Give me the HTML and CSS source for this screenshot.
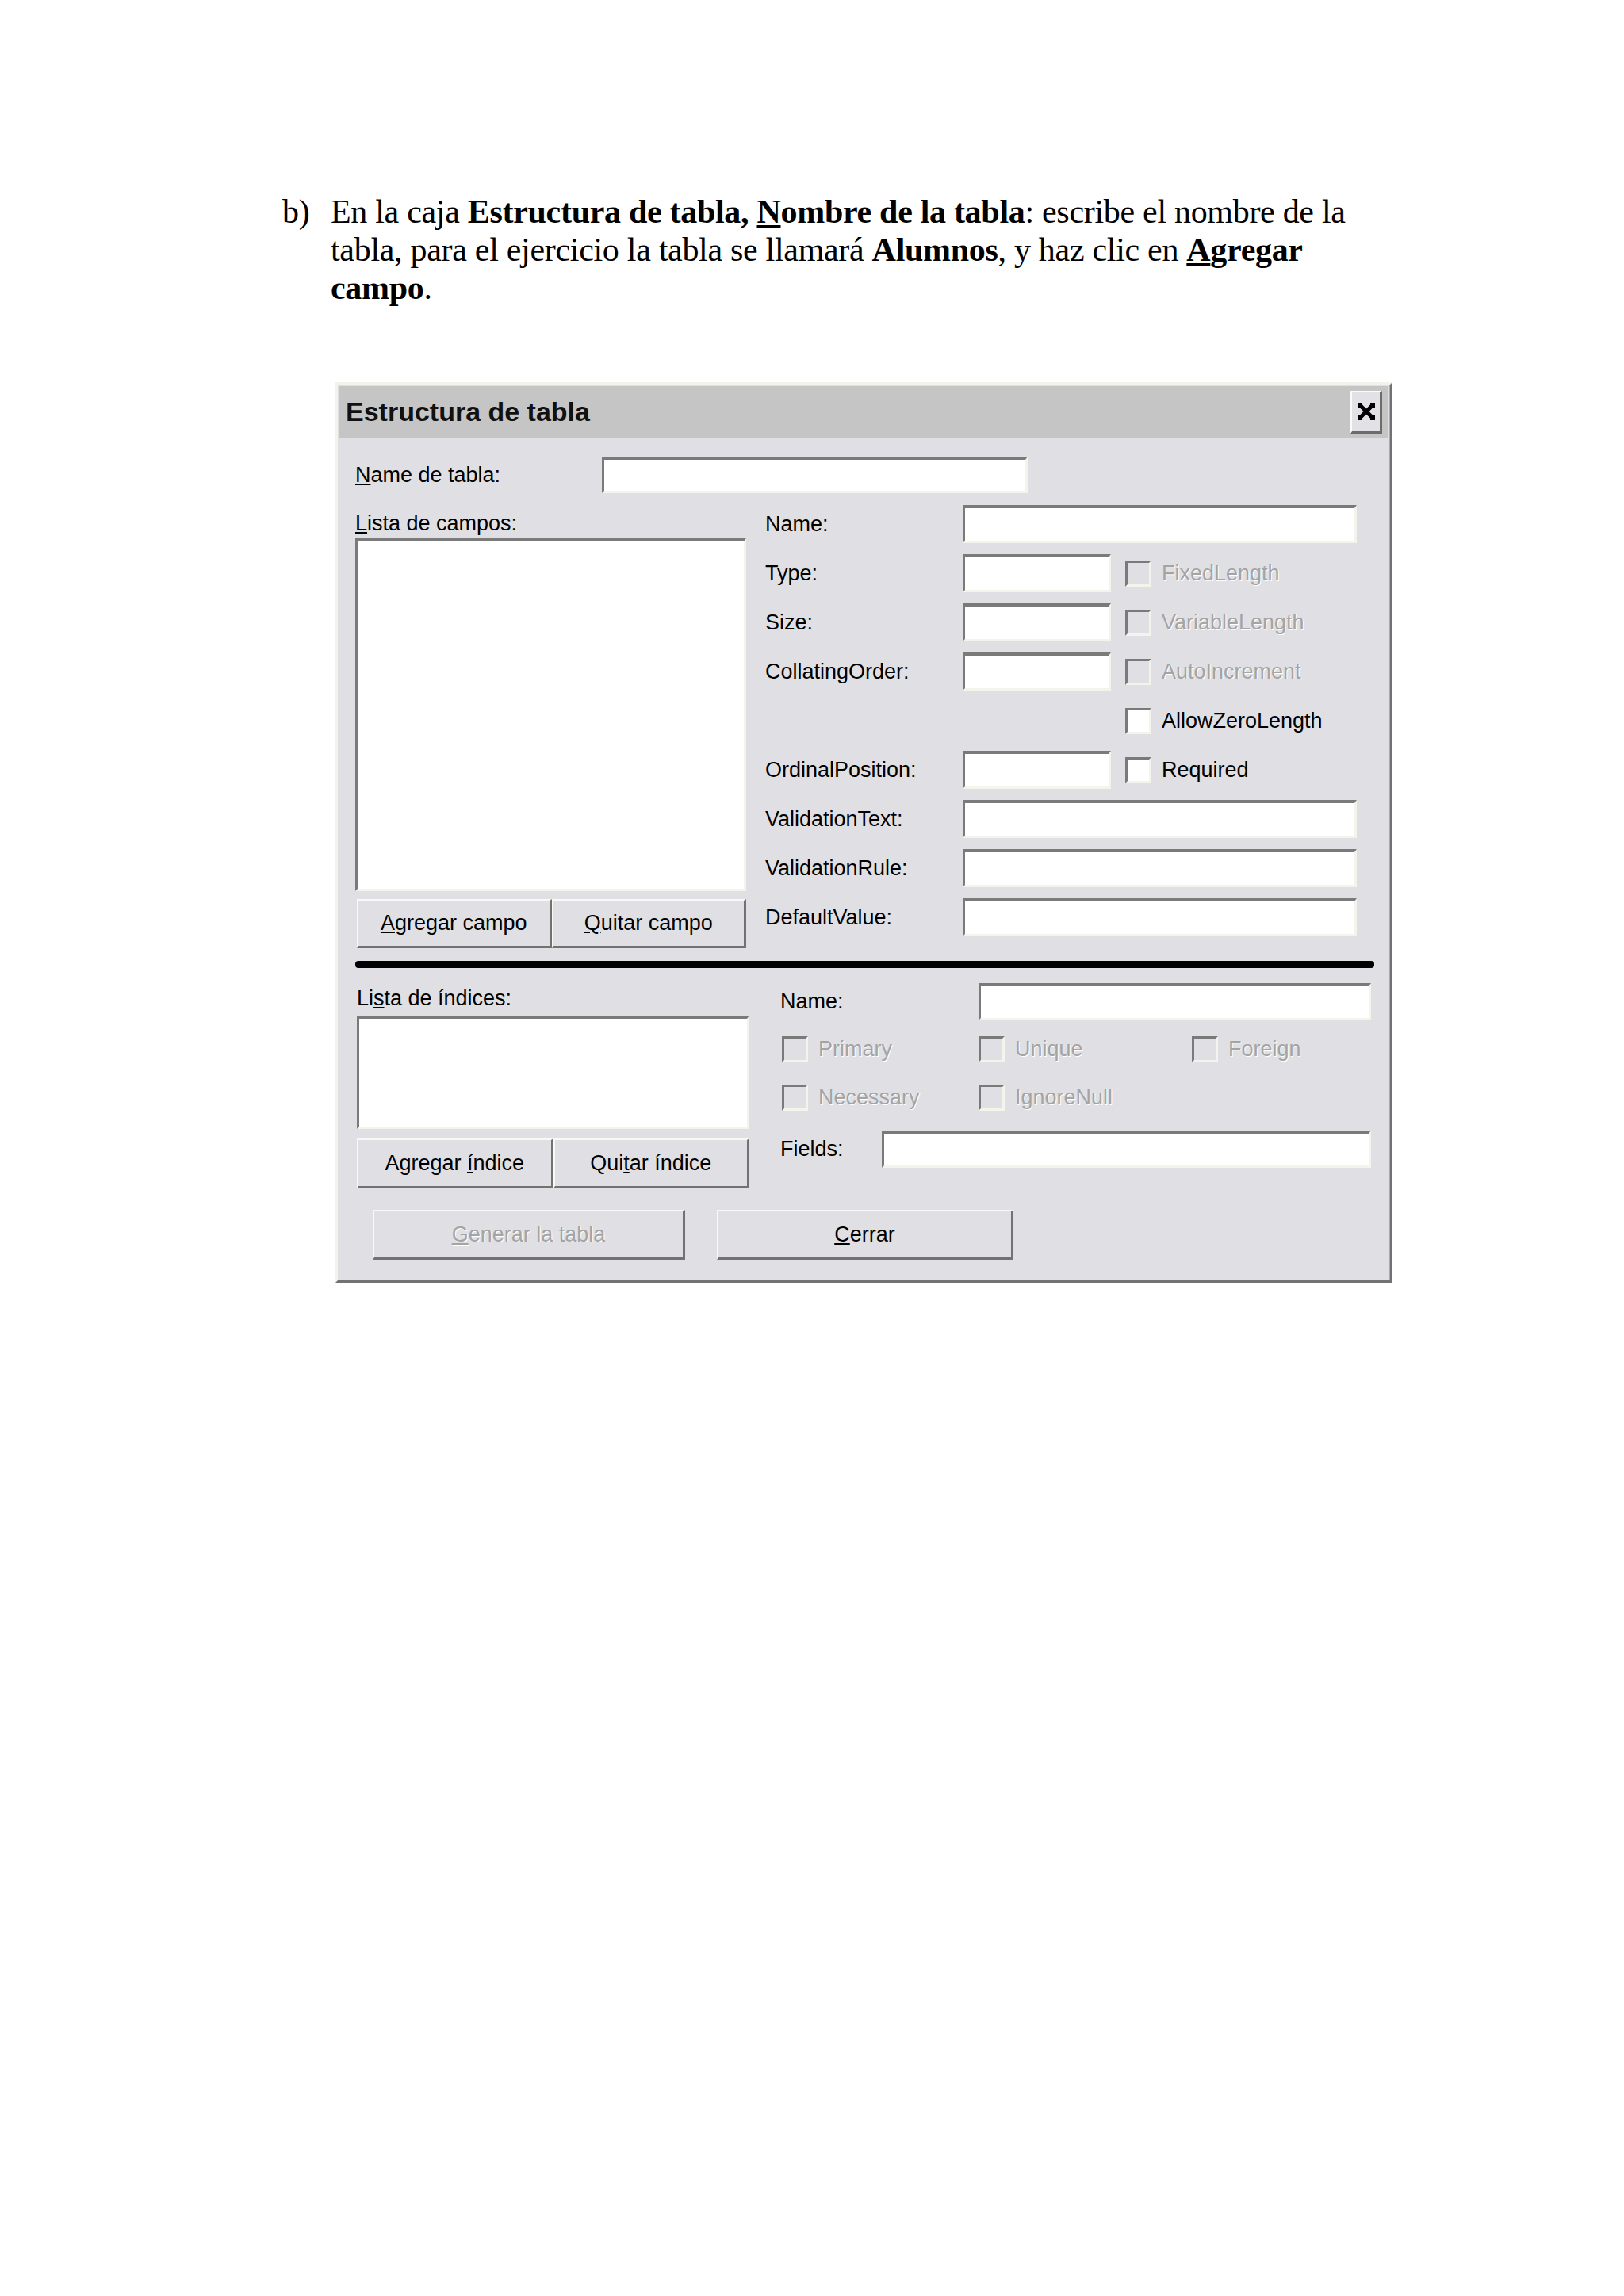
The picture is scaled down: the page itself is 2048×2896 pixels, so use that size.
FILE: index.html
```html
<!DOCTYPE html>
<html lang="es">
<head>
<meta charset="utf-8">
<title>Estructura de tabla</title>
<link rel="stylesheet" href="styles.css">
</head>
<body>
<div class="page">
  <div class="item">
    <span class="marker">b)</span>
    <p class="text">En la caja <b>Estructura de tabla,</b> <b><u>N</u>ombre de la tabla</b>: escribe el nombre de la<br>tabla, para el ejercicio la tabla se llamará <b>Alumnos</b>, y haz clic en <b><u>A</u>gregar</b><br><b>campo</b>.</p>
  </div>

  <div class="dialog">
    <div class="titlebar">
      <span class="title">Estructura de tabla</span>
      <span class="close">
        <svg width="22" height="22" viewBox="0 0 22 22" aria-hidden="true">
          <path d="M4 4 L18 18 M18 4 L4 18" stroke="#000" stroke-width="5" stroke-linecap="square" fill="none"/>
          <path fill="#000" d="M0 0h6v6h-6z M16 0h6v6h-6z M0 16h6v6h-6z M16 16h6v6h-6z M8 8h6v6h-6z"/>
        </svg>
      </span>
    </div>

    <div class="body">
      <div class="name-row">
        <span class="name-label"><u>N</u>ame de tabla:</span>
        <span class="field name-field"></span>
      </div>

      <div class="upper">
        <div class="col-left">
          <div class="list-label"><u>L</u>ista de campos:</div>
          <div class="field listbox"></div>
          <div class="btn-pair">
            <span class="btn"><span><u>A</u>gregar campo</span></span>
            <span class="btn"><span><u>Q</u>uitar campo</span></span>
          </div>
        </div>

        <div class="props">
          <span class="lbl">Name:</span>
          <span class="field span2"></span>

          <span class="lbl">Type:</span>
          <span class="field"></span>
          <span class="cb disabled"><span class="box"></span><span>FixedLength</span></span>

          <span class="lbl">Size:</span>
          <span class="field"></span>
          <span class="cb disabled"><span class="box"></span><span>VariableLength</span></span>

          <span class="lbl">CollatingOrder:</span>
          <span class="field"></span>
          <span class="cb disabled"><span class="box"></span><span>AutoIncrement</span></span>

          <span class="cb col3"><span class="box"></span><span>AllowZeroLength</span></span>

          <span class="lbl">OrdinalPosition:</span>
          <span class="field"></span>
          <span class="cb"><span class="box"></span><span>Required</span></span>

          <span class="lbl">ValidationText:</span>
          <span class="field span2"></span>

          <span class="lbl">ValidationRule:</span>
          <span class="field span2"></span>

          <span class="lbl">DefaultValue:</span>
          <span class="field span2"></span>
        </div>
      </div>

      <div class="separator"></div>

      <div class="lower">
        <div class="col-left2">
          <div class="list-label2">Li<u>s</u>ta de índices:</div>
          <div class="field listbox2"></div>
          <div class="btn-pair2">
            <span class="btn"><span>Agregar <u>í</u>ndice</span></span>
            <span class="btn"><span>Qui<u>t</u>ar índice</span></span>
          </div>
        </div>

        <div class="col-right2">
          <div class="lrow">
            <span class="lrow-label">Name:</span>
            <span class="field lrow-field"></span>
          </div>
          <div class="cbrow first">
            <span class="cb disabled pad2"><span class="box"></span><span>Primary</span></span>
            <span class="cb disabled"><span class="box"></span><span>Unique</span></span>
            <span class="cb disabled"><span class="box"></span><span>Foreign</span></span>
          </div>
          <div class="cbrow second">
            <span class="cb disabled pad2"><span class="box"></span><span>Necessary</span></span>
            <span class="cb disabled"><span class="box"></span><span>IgnoreNull</span></span>
          </div>
          <div class="frow">
            <span class="frow-label">Fields:</span>
            <span class="field frow-field"></span>
          </div>
        </div>
      </div>

      <div class="footer">
        <span class="btn big generar disabled-text"><span><u>G</u>enerar la tabla</span></span>
        <span class="btn big cerrar"><span><u>C</u>errar</span></span>
      </div>
    </div>
  </div>
</div>
</body>
</html>
```

FILE: styles.css
```css
* { box-sizing: border-box; }

html, body {
  margin: 0;
  padding: 0;
  background: #ffffff;
}

body {
  width: 2048px;
  min-height: 2896px;
}

.page {
  padding-top: 243px;
}

/* Instruction paragraph */
.item {
  display: flex;
  margin-left: 356px;
  font-family: "Liberation Serif", "Times New Roman", serif;
  font-size: 42px;
  line-height: 48px;
  letter-spacing: -0.3px;
  color: #000;
}

.marker {
  width: 61px;
  flex: none;
}

.text {
  margin: 0;
}

/* Dialog window */
.dialog {
  margin: 95px 0 0 423px;
  width: 1333px;
  border: 3px solid;
  border-color: #f3f3ee #727272 #727272 #f3f3ee;
  padding: 2px 3px 1px 2px;
  background: #e0e0e4;
  box-shadow: inset -1px -1px 0 #a9a9a9;
  font-family: "Liberation Sans", Arial, sans-serif;
  font-size: 27px;
  color: #000;
}

.titlebar {
  height: 65px;
  background: #c5c5c5;
  display: flex;
  align-items: center;
  justify-content: space-between;
  padding: 0 7px 0 8px;
}

.title {
  font-weight: bold;
  font-size: 34px;
  color: #111;
}

.close {
  width: 40px;
  height: 54px;
  background: #e2e2e6;
  border: 2px solid;
  border-color: #fafaf6 #6c6c6c #6c6c6c #fafaf6;
  border-right-width: 3px;
  border-bottom-width: 3px;
  display: flex;
  align-items: center;
  justify-content: center;
}

.body {
  padding: 24px 17px 25px 20px;
}

/* Sunken fields */
.field {
  display: block;
  background: #ffffff;
  border: 3px solid;
  border-color: #7a7a7a #f4f4ec #f4f4ec #7a7a7a;
  border-top-width: 4px;
  height: 48px;
}

.name-row {
  display: flex;
  align-items: center;
  height: 46px;
  margin-bottom: 15px;
}

.name-label {
  width: 311px;
}

.name-field {
  width: 537px;
  height: 46px;
}

/* Upper section */
.upper {
  display: flex;
  gap: 24px;
}

.col-left {
  width: 493px;
  display: flex;
  flex-direction: column;
}

.list-label {
  height: 42px;
  padding-top: 4px;
  line-height: 38px;
}

.listbox {
  height: 445px;
}

.btn-pair {
  display: flex;
  margin: 10px 0 0 2px;
  height: 62px;
}

.btn-pair .btn,
.btn-pair2 .btn {
  flex: 1;
}

.btn {
  background: #e0e0e4;
  border: 2px solid;
  border-color: #f8f8f4 #727272 #727272 #f8f8f4;
  border-right-width: 3px;
  border-bottom-width: 3px;
  display: flex;
  align-items: center;
  justify-content: center;
}

.props {
  width: 746px;
  display: grid;
  grid-template-columns: 249px 187px 310px;
  grid-auto-rows: 48px;
  row-gap: 14px;
  align-items: center;
}

.props .field {
  align-self: stretch;
}

.span2 {
  grid-column: 2 / 4;
}

.col3 {
  grid-column: 3;
}

.props .cb {
  padding-left: 18px;
}

/* Checkboxes */
.cb {
  display: flex;
  align-items: center;
  gap: 13px;
}

.box {
  width: 33px;
  height: 33px;
  flex: none;
  background: #ffffff;
  border: 3px solid;
  border-color: #7a7a7a #f4f4ec #f4f4ec #7a7a7a;
}

.cb.disabled .box {
  background: #e0e0e4;
}

.cb.disabled span + span,
.disabled-text span {
  color: #a4a4a4;
  text-shadow: 1px 1px 0 #ffffff;
}

/* Separator */
.separator {
  height: 9px;
  background: #000;
  border-radius: 4px;
  margin: 16px 0 19px;
}

/* Lower section */
.lower {
  display: flex;
}

.col-left2 {
  width: 495px;
  margin-left: 2px;
  display: flex;
  flex-direction: column;
}

.list-label2 {
  height: 41px;
  line-height: 38px;
}

.listbox2 {
  height: 143px;
}

.btn-pair2 {
  display: flex;
  margin-top: 12px;
  height: 63px;
}

.col-right2 {
  margin-left: 39px;
  width: 745px;
}

.lrow {
  display: flex;
  align-items: center;
  height: 47px;
}

.lrow-label {
  width: 250px;
}

.lrow-field {
  width: 495px;
  height: 47px;
}

.cbrow {
  display: grid;
  grid-template-columns: 250px 269px 1fr;
  height: 34px;
  align-items: center;
}

.cbrow.first {
  margin-top: 19px;
}

.cbrow.second {
  margin-top: 27px;
}

.pad2 {
  padding-left: 2px;
}

.frow {
  display: flex;
  align-items: center;
  height: 47px;
  margin-top: 25px;
}

.frow-label {
  width: 128px;
}

.frow-field {
  width: 617px;
  height: 47px;
}

/* Footer buttons */
.footer {
  display: flex;
  gap: 40px;
  margin: 27px 0 0 22px;
}

.big {
  height: 63px;
}

.generar {
  width: 394px;
}

.cerrar {
  width: 374px;
}
```
